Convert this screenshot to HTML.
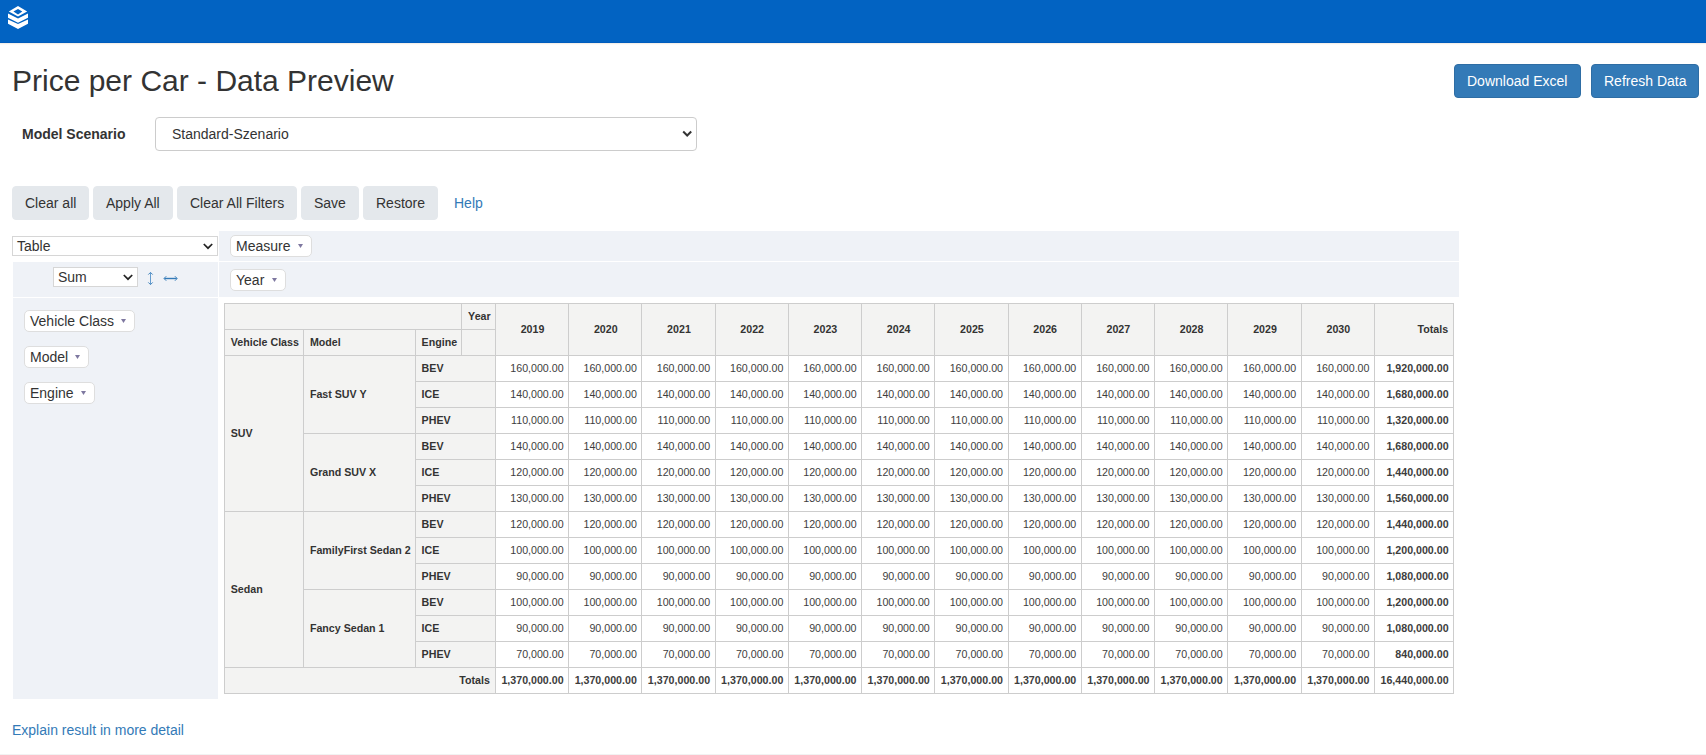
<!DOCTYPE html>
<html><head><meta charset="utf-8"><title>Price per Car - Data Preview</title>
<style>
*{box-sizing:border-box}
html,body{margin:0;padding:0}
body{width:1706px;height:755px;overflow:hidden;position:relative;background:#fff;font-family:"Liberation Sans",sans-serif;font-size:14px;line-height:1.42857143;color:#333}
.abs{position:absolute}
.topbar{left:0;top:0;width:1706px;height:43px;background:#0263c2;border-bottom:1px solid #005cbd}
.title{left:12px;top:64px;margin:0;font-size:30px;font-weight:500;line-height:33px;white-space:nowrap;color:#333}
.btnp{top:64px;height:34px;padding:6px 12px;border:1px solid #2e6da4;background:#337ab7;color:#fff;border-radius:4px;white-space:nowrap;line-height:20px}
.lbl{left:22px;top:124px;font-weight:bold;line-height:20px}
.sel{left:155px;top:117px;width:542px;height:34px;border:1px solid #ccc;border-radius:4px;background:#fff;padding:6px 16px;line-height:20px}
.btn{top:186px;height:34px;padding:6px 12px;border:1px solid #e4e8ec;background:#e4e8ec;color:#333;border-radius:4px;white-space:nowrap;line-height:20px}
.help{top:187px;left:441px;height:34px;padding:6px 13px;color:#337ab7;line-height:20px}
.cont{background:#eff2f7}
.rsel{left:12px;top:236px;width:206px;height:20px;border:1px solid #d6d6d6;background:#fff;line-height:18px;padding:0 4px;font-size:14px}
.pill{height:22px;border:1px solid #dedede;border-radius:5px;background:#fff;padding:0 5px;line-height:20px;white-space:nowrap}
.tri{position:absolute;top:8px}
.pvtTable{position:absolute;left:224px;top:303px;border-collapse:collapse;font-size:8pt;text-align:left;line-height:15px}
.pvtTable th{background:#f3f3f2;border:1px solid #cdcdcd;padding:5px;font-weight:bold;color:#333;vertical-align:middle;white-space:nowrap}
.pvtTable td{background:#fff;border:1px solid #cdcdcd;padding:5px 4.5px 5px 5.5px;text-align:right;color:#3d3d3d;vertical-align:top;white-space:nowrap}
.pvtTable .pvtColLabel{text-align:center;padding:5px 4.5px 5px 5.5px}
.pvtTable .pvtRowLabel,.pvtTable .pvtAxisLabel{padding:5px 4.25px 5px 5.75px}
.pvtTable .pvtTotalLabel{text-align:right}
.pvtTotal,.pvtGrandTotal{font-weight:bold}
.link{left:12px;top:720px;color:#337ab7;line-height:20px;white-space:nowrap}
</style></head><body>
<div class="abs topbar"></div>
<div class="abs" style="left:0;top:43px;width:1706px;height:1px;background:#f2efea"></div>
<div class="abs" style="left:0;top:44px;width:1706px;height:1px;background:#fdfbf8"></div>
<svg class="abs" style="left:0;top:0" width="40" height="40" viewBox="0 0 40 40">
<path fill="#fff" fill-rule="evenodd" d="M18 6 L27.2 11.5 L18 16.6 L8.8 11.5 Z M18 8.9 L22.3 11.6 L18 14.5 L13.4 11.6 Z"/>
<path fill="#fff" d="M8 13.6 L18 18.4 L28 13.6 L28 17.7 L18 22.7 L8 17.7 Z"/>
<path fill="#fff" d="M8 19.6 L18 24.1 L28 19.6 L28 23.8 L18 28.9 L8 23.8 Z"/>
</svg>
<h2 class="abs title">Price per Car - Data Preview</h2>
<div class="abs btnp" style="left:1454px;width:127px">Download Excel</div>
<div class="abs btnp" style="left:1591px;width:108px">Refresh Data</div>
<div class="abs lbl">Model Scenario</div>
<div class="abs sel">Standard-Szenario
<svg class="abs" style="left:526px;top:12px" width="11" height="8" viewBox="0 0 11 8"><path d="M1.2 1.5 L5.2 5.5 L9.2 1.5" fill="none" stroke="#333" stroke-width="2"/></svg></div>
<div class="abs btn" style="left:12px;width:77px">Clear all</div>
<div class="abs btn" style="left:93px;width:80px">Apply All</div>
<div class="abs btn" style="left:177px;width:120px">Clear All Filters</div>
<div class="abs btn" style="left:301px;width:58px">Save</div>
<div class="abs btn" style="left:363px;width:75px">Restore</div>
<div class="abs help">Help</div>
<div class="abs cont" style="left:219px;top:231px;width:1240px;height:30px"></div>
<div class="abs cont" style="left:13px;top:262px;width:205px;height:35px"></div>
<div class="abs cont" style="left:219px;top:262px;width:1240px;height:35px"></div>
<div class="abs cont" style="left:13px;top:298px;width:205px;height:401px"></div>
<div class="abs rsel">Table<svg class="abs" style="left:190px;top:6px" width="11" height="8" viewBox="0 0 11 8"><path d="M0.8 1 L5 5.2 L9.2 1" fill="none" stroke="#222" stroke-width="1.7"/></svg></div>
<div class="abs rsel" style="left:53px;top:267px;width:85px">Sum<svg class="abs" style="left:69px;top:6px" width="11" height="8" viewBox="0 0 11 8"><path d="M0.8 1 L5 5.2 L9.2 1" fill="none" stroke="#222" stroke-width="1.7"/></svg></div>
<svg class="abs" style="left:140px;top:266px" width="45" height="24" viewBox="140 266 45 24">
<g fill="none" stroke="#337ab7">
<path d="M150.5 272.8 V284.2" stroke-width="0.85" stroke="#4b8cc6"/>
<path d="M148.3 274.6 L150.5 272.4 L152.7 274.6 M148.3 282.4 L150.5 284.6 L152.7 282.4" stroke-width="0.9"/>
<path d="M164.3 278.5 H176.8" stroke-width="1.4"/>
<path d="M166.3 276.2 L164 278.5 L166.3 280.8 M174.9 276.2 L177.2 278.5 L174.9 280.8" stroke-width="0.9"/>
</g></svg>
<div class="abs pill" style="left:230px;top:235px;width:82px">Measure<svg class="abs tri" style="left:67px" width="5" height="5" viewBox="0 0 5 5"><path d="M0 0 H5 L2.5 4 Z" fill="#7e78a0"/></svg></div>
<div class="abs pill" style="left:230px;top:269px;width:56px">Year<svg class="abs tri" style="left:41px" width="5" height="5" viewBox="0 0 5 5"><path d="M0 0 H5 L2.5 4 Z" fill="#7e78a0"/></svg></div>
<div class="abs pill" style="left:24px;top:310px;width:111px">Vehicle Class<svg class="abs tri" style="left:96px" width="5" height="5" viewBox="0 0 5 5"><path d="M0 0 H5 L2.5 4 Z" fill="#7e78a0"/></svg></div>
<div class="abs pill" style="left:24px;top:346px;width:65px">Model<svg class="abs tri" style="left:50px" width="5" height="5" viewBox="0 0 5 5"><path d="M0 0 H5 L2.5 4 Z" fill="#7e78a0"/></svg></div>
<div class="abs pill" style="left:24px;top:382px;width:71px">Engine<svg class="abs tri" style="left:56px" width="5" height="5" viewBox="0 0 5 5"><path d="M0 0 H5 L2.5 4 Z" fill="#7e78a0"/></svg></div>
<table class="pvtTable">
<thead><tr><th colspan="3" rowspan="1"></th><th class="pvtAxisLabel">Year</th>
<th class="pvtColLabel" rowspan="2">2019</th>
<th class="pvtColLabel" rowspan="2">2020</th>
<th class="pvtColLabel" rowspan="2">2021</th>
<th class="pvtColLabel" rowspan="2">2022</th>
<th class="pvtColLabel" rowspan="2">2023</th>
<th class="pvtColLabel" rowspan="2">2024</th>
<th class="pvtColLabel" rowspan="2">2025</th>
<th class="pvtColLabel" rowspan="2">2026</th>
<th class="pvtColLabel" rowspan="2">2027</th>
<th class="pvtColLabel" rowspan="2">2028</th>
<th class="pvtColLabel" rowspan="2" style="width:73.5px">2029</th>
<th class="pvtColLabel" rowspan="2">2030</th>
<th class="pvtTotalLabel" rowspan="2">Totals</th></tr>
<tr><th class="pvtAxisLabel">Vehicle Class</th><th class="pvtAxisLabel">Model</th><th class="pvtAxisLabel">Engine</th><th></th></tr></thead><tbody>
<tr>
<th class="pvtRowLabel" rowspan="6">SUV</th>
<th class="pvtRowLabel" rowspan="3">Fast SUV Y</th>
<th class="pvtRowLabel" colspan="2">BEV</th>
<td>160,000.00</td>
<td>160,000.00</td>
<td>160,000.00</td>
<td>160,000.00</td>
<td>160,000.00</td>
<td>160,000.00</td>
<td>160,000.00</td>
<td>160,000.00</td>
<td>160,000.00</td>
<td>160,000.00</td>
<td>160,000.00</td>
<td>160,000.00</td>
<td class="pvtTotal">1,920,000.00</td>
</tr>
<tr>
<th class="pvtRowLabel" colspan="2">ICE</th>
<td>140,000.00</td>
<td>140,000.00</td>
<td>140,000.00</td>
<td>140,000.00</td>
<td>140,000.00</td>
<td>140,000.00</td>
<td>140,000.00</td>
<td>140,000.00</td>
<td>140,000.00</td>
<td>140,000.00</td>
<td>140,000.00</td>
<td>140,000.00</td>
<td class="pvtTotal">1,680,000.00</td>
</tr>
<tr>
<th class="pvtRowLabel" colspan="2">PHEV</th>
<td>110,000.00</td>
<td>110,000.00</td>
<td>110,000.00</td>
<td>110,000.00</td>
<td>110,000.00</td>
<td>110,000.00</td>
<td>110,000.00</td>
<td>110,000.00</td>
<td>110,000.00</td>
<td>110,000.00</td>
<td>110,000.00</td>
<td>110,000.00</td>
<td class="pvtTotal">1,320,000.00</td>
</tr>
<tr>
<th class="pvtRowLabel" rowspan="3">Grand SUV X</th>
<th class="pvtRowLabel" colspan="2">BEV</th>
<td>140,000.00</td>
<td>140,000.00</td>
<td>140,000.00</td>
<td>140,000.00</td>
<td>140,000.00</td>
<td>140,000.00</td>
<td>140,000.00</td>
<td>140,000.00</td>
<td>140,000.00</td>
<td>140,000.00</td>
<td>140,000.00</td>
<td>140,000.00</td>
<td class="pvtTotal">1,680,000.00</td>
</tr>
<tr>
<th class="pvtRowLabel" colspan="2">ICE</th>
<td>120,000.00</td>
<td>120,000.00</td>
<td>120,000.00</td>
<td>120,000.00</td>
<td>120,000.00</td>
<td>120,000.00</td>
<td>120,000.00</td>
<td>120,000.00</td>
<td>120,000.00</td>
<td>120,000.00</td>
<td>120,000.00</td>
<td>120,000.00</td>
<td class="pvtTotal">1,440,000.00</td>
</tr>
<tr>
<th class="pvtRowLabel" colspan="2">PHEV</th>
<td>130,000.00</td>
<td>130,000.00</td>
<td>130,000.00</td>
<td>130,000.00</td>
<td>130,000.00</td>
<td>130,000.00</td>
<td>130,000.00</td>
<td>130,000.00</td>
<td>130,000.00</td>
<td>130,000.00</td>
<td>130,000.00</td>
<td>130,000.00</td>
<td class="pvtTotal">1,560,000.00</td>
</tr>
<tr>
<th class="pvtRowLabel" rowspan="6">Sedan</th>
<th class="pvtRowLabel" rowspan="3">FamilyFirst Sedan 2</th>
<th class="pvtRowLabel" colspan="2">BEV</th>
<td>120,000.00</td>
<td>120,000.00</td>
<td>120,000.00</td>
<td>120,000.00</td>
<td>120,000.00</td>
<td>120,000.00</td>
<td>120,000.00</td>
<td>120,000.00</td>
<td>120,000.00</td>
<td>120,000.00</td>
<td>120,000.00</td>
<td>120,000.00</td>
<td class="pvtTotal">1,440,000.00</td>
</tr>
<tr>
<th class="pvtRowLabel" colspan="2">ICE</th>
<td>100,000.00</td>
<td>100,000.00</td>
<td>100,000.00</td>
<td>100,000.00</td>
<td>100,000.00</td>
<td>100,000.00</td>
<td>100,000.00</td>
<td>100,000.00</td>
<td>100,000.00</td>
<td>100,000.00</td>
<td>100,000.00</td>
<td>100,000.00</td>
<td class="pvtTotal">1,200,000.00</td>
</tr>
<tr>
<th class="pvtRowLabel" colspan="2">PHEV</th>
<td>90,000.00</td>
<td>90,000.00</td>
<td>90,000.00</td>
<td>90,000.00</td>
<td>90,000.00</td>
<td>90,000.00</td>
<td>90,000.00</td>
<td>90,000.00</td>
<td>90,000.00</td>
<td>90,000.00</td>
<td>90,000.00</td>
<td>90,000.00</td>
<td class="pvtTotal">1,080,000.00</td>
</tr>
<tr>
<th class="pvtRowLabel" rowspan="3">Fancy Sedan 1</th>
<th class="pvtRowLabel" colspan="2">BEV</th>
<td>100,000.00</td>
<td>100,000.00</td>
<td>100,000.00</td>
<td>100,000.00</td>
<td>100,000.00</td>
<td>100,000.00</td>
<td>100,000.00</td>
<td>100,000.00</td>
<td>100,000.00</td>
<td>100,000.00</td>
<td>100,000.00</td>
<td>100,000.00</td>
<td class="pvtTotal">1,200,000.00</td>
</tr>
<tr>
<th class="pvtRowLabel" colspan="2">ICE</th>
<td>90,000.00</td>
<td>90,000.00</td>
<td>90,000.00</td>
<td>90,000.00</td>
<td>90,000.00</td>
<td>90,000.00</td>
<td>90,000.00</td>
<td>90,000.00</td>
<td>90,000.00</td>
<td>90,000.00</td>
<td>90,000.00</td>
<td>90,000.00</td>
<td class="pvtTotal">1,080,000.00</td>
</tr>
<tr>
<th class="pvtRowLabel" colspan="2">PHEV</th>
<td>70,000.00</td>
<td>70,000.00</td>
<td>70,000.00</td>
<td>70,000.00</td>
<td>70,000.00</td>
<td>70,000.00</td>
<td>70,000.00</td>
<td>70,000.00</td>
<td>70,000.00</td>
<td>70,000.00</td>
<td>70,000.00</td>
<td>70,000.00</td>
<td class="pvtTotal">840,000.00</td>
</tr>
<tr><th class="pvtTotalLabel" colspan="4">Totals</th>
<td class="pvtTotal">1,370,000.00</td>
<td class="pvtTotal">1,370,000.00</td>
<td class="pvtTotal">1,370,000.00</td>
<td class="pvtTotal">1,370,000.00</td>
<td class="pvtTotal">1,370,000.00</td>
<td class="pvtTotal">1,370,000.00</td>
<td class="pvtTotal">1,370,000.00</td>
<td class="pvtTotal">1,370,000.00</td>
<td class="pvtTotal">1,370,000.00</td>
<td class="pvtTotal">1,370,000.00</td>
<td class="pvtTotal">1,370,000.00</td>
<td class="pvtTotal">1,370,000.00</td>
<td class="pvtGrandTotal">16,440,000.00</td></tr></tbody></table><div class="abs link">Explain result in more detail</div>
<div class="abs" style="left:0;top:754px;width:1706px;height:1px;background:#f2f2f2"></div>
</body></html>
